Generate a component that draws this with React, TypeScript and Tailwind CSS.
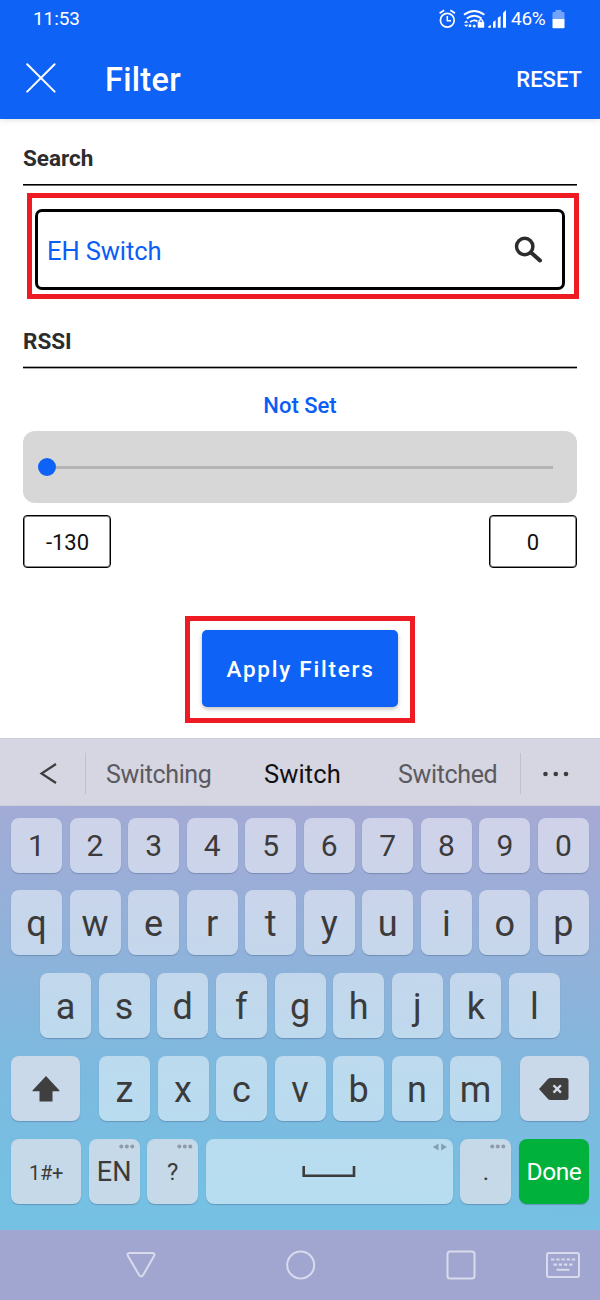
import type { ReactNode } from 'react';

const numberKeys = ['1', '2', '3', '4', '5', '6', '7', '8', '9', '0'];
const topKeys = ['q', 'w', 'e', 'r', 't', 'y', 'u', 'i', 'o', 'p'];
const homeKeys = ['a', 's', 'd', 'f', 'g', 'h', 'j', 'k', 'l'];
const bottomKeys = ['z', 'x', 'c', 'v', 'b', 'n', 'm'];

function Key({ children, className = 'w-[51px] bg-white/48 pt-[2px]' }: { children?: ReactNode; className?: string }) {
  return (
    <div
      className={`relative flex h-full shrink-0 items-center justify-center rounded-[8px] shadow-[0_1px_1px_rgba(70,90,130,0.4)] ${className}`}
    >
      {children}
    </div>
  );
}

function Dots() {
  return (
    <svg className="absolute top-[5px] right-[5px]" width="16" height="5" viewBox="0 0 16 5" fill="#8f9ba8">
      <circle cx="2.3" cy="2.5" r="2" />
      <circle cx="7.8" cy="2.5" r="2" />
      <circle cx="13.3" cy="2.5" r="2" />
    </svg>
  );
}

function StatusIcons() {
  return (
    <svg width="70" height="22" viewBox="437 8 70 22" fill="none" stroke="#fff">
      <circle cx="446.3" cy="20.2" r="6.9" strokeWidth="1.7" />
      <path d="M446.3 16v4.700h3.800" strokeWidth="1.5" />
      <path d="M438.600 13.300l4.600-3.100M454 13.300l-4.600-3.100" strokeWidth="1.7" />
      <path d="M463 14.800q10.200-7.600 20.400 0" strokeWidth="1.9" />
      <path d="M465.800 18.600q7.400-5.700 14.800 0" strokeWidth="1.9" />
      <path d="M469 22q4.300-3 7.500-.5" strokeWidth="1.8" />
      <g fill="#fff" stroke="none">
        <circle cx="473.200" cy="26" r="1.500" />
        <path d="M463 22.800l2.200-2.200 2.200 2.200zM463 24.800l2.200 2.200 2.200-2.200zM467.800 24.500h2.400v2.400h-2.400z" />
        <rect x="476.700" y="21.800" width="6.500" height="5.900" rx=".6" />
        <path d="M487.300 27.700v-1.400l2.600-1.400v2.800zM492 27.700v-5.700l2.600-1.800v7.500zM496.800 27.700v-9.900l2.800-1.800v11.700z" />
        <path d="M502 27.700V13l3-3v17.700z" />
      </g>
      <path d="M478.200 22v-1.300q1.700-2.300 3.500 0v1.300" strokeWidth="1.2" />
    </svg>
  );
}

function SectionTitle({ children }: { children: ReactNode }) {
  return <h2 className="h-[26px] text-[22.500px] leading-[26px] font-bold text-[#2b2c2e]">{children}</h2>;
}

export default function App() {
  return (
    <div className="flex h-[1300px] w-[600px] flex-col overflow-hidden bg-white font-['Roboto',sans-serif] whitespace-nowrap">
      <header className="h-[119px] shrink-0 bg-[#0f62f6] text-white shadow-[0_1px_6px_rgba(0,0,0,0.12)]">
        <div className="flex h-[38px] items-center pr-[35px] pb-[1px] pl-[33px]">
          <span className="text-[19px] leading-none tracking-[-0.100px]">11:53</span>
          <div className="ml-auto flex items-center">
            <StatusIcons />
            <span className="ml-[3px] w-[37px] text-[19px] leading-none tracking-[-0.300px]">46%</span>
            <svg className="ml-[4px]" width="13" height="20" viewBox="0 0 13 20">
              <path d="M3.500 1h6v2h2q1 0 1 1v6H.5V4q0-1 1-1h2z" fill="#fff" fillOpacity=".42" />
              <path d="M.5 10h12v8.500q0 .8-1 .8h-10q-1 0-1-.8z" fill="#fff" />
            </svg>
          </div>
        </div>
        <div className="flex h-[81px] items-center pt-[3px] pr-[18px] pl-[26px]">
          <svg className="mb-[4px]" width="30" height="30" viewBox="0 0 30 30" stroke="#fff" strokeWidth="2" strokeLinecap="round">
            <path d="M1.200 1.200l27.400 27.400M28.600 1.200L1.200 28.600" />
          </svg>
          <h1 className="ml-[49px] text-[32.500px] leading-none font-medium tracking-[0.300px]">Filter</h1>
          <span className="ml-auto text-[22px] leading-none font-medium">RESET</span>
        </div>
      </header>

      <main className="flex h-[619px] shrink-0 flex-col px-[23px] pt-[26px]">
        <SectionTitle>Search</SectionTitle>
        <div className="mt-[13px] h-[2px] w-[554px] shrink-0 border-t border-black bg-[#666]" />
        <div className="mt-[7px] ml-[4px] h-[106px] w-[552px] shrink-0 border-[5px] border-[#ee1b23] pt-[11px] pl-[3px]">
          <div className="flex h-[81px] w-[530px] items-center justify-between rounded-[7px] border-[3px] border-black pr-[19px] pl-[9px]">
            <span className="pt-[4px] text-[25.500px] leading-none tracking-[-0.100px] text-[#0a5df5]">EH Switch</span>
            <svg className="mb-[2px]" width="30" height="30" viewBox="512 234 30 30" fill="none" stroke="#2b2c2e">
              <circle cx="523.700" cy="246.500" r="8.200" strokeWidth="3.500" />
              <path d="M530 252.500l9 8" strokeWidth="4" strokeLinecap="round" />
            </svg>
          </div>
        </div>
        <div className="mt-[29px]">
          <SectionTitle>RSSI</SectionTitle>
        </div>
        <div className="mt-[12px] h-[3px] w-[554px] shrink-0 border-y border-[#aaa] bg-black" />
        <p className="mt-[24px] h-[26px] text-center text-[22px] leading-[26px] font-medium text-[#0a5df5]">Not Set</p>
        <div className="mt-[12px] flex h-[72px] w-[554px] shrink-0 items-center rounded-[12px] bg-[#d7d7d7] pl-[15px]">
          <div className="h-[18px] w-[18px] rounded-full bg-[#0f62f6]" />
          <div className="h-[3px] w-[497px] bg-[#b3b3b3]" />
        </div>
        <div className="mt-[12px] flex h-[53px] shrink-0 justify-between text-[22px] text-[#111]">
          <div className="flex w-[88px] items-center justify-center rounded-[4px] border border-black pt-[2px] pl-[1px] shadow-[inset_0_0_0_1px_#888]">-130</div>
          <div className="flex w-[88px] items-center justify-center rounded-[4px] border border-black pt-[2px] shadow-[inset_0_0_0_1px_#888]">0</div>
        </div>
        <div className="mt-[48px] ml-[162px] flex h-[107px] w-[230px] shrink-0 justify-center border-[5px] border-[#ee1b23] pt-[9px]">
          <button className="h-[77px] w-[196px] rounded-[5px] bg-[#0f62f6] pt-[2px] pl-[1px] text-[22.500px] font-medium tracking-[1.750px] text-white shadow-[0_2px_4px_rgba(0,0,0,0.25)]">
            Apply Filters
          </button>
        </div>
      </main>

      <div className="flex h-[68px] shrink-0 items-center border-t border-b border-[#cccddd] bg-[#d6d5e2] pt-[3px] text-[25px] text-[#5a5a60]">
        <svg className="ml-[39px]" width="20" height="24" viewBox="0 0 20 24" fill="none" stroke="#3d3d3d" strokeWidth="2.200">
          <path d="M17 2L2.500 11.500l14.500 9.500" />
        </svg>
        <div className="ml-[25.500px] h-[41px] w-[1.500px] bg-[#c0c0cf]" />
        <span className="ml-[20px] w-[158px] pt-[2px] tracking-[-0.350px]">Switching</span>
        <span className="w-[134px] pt-[1px] text-[25.500px] tracking-[0.100px] text-[#111]">Switch</span>
        <span className="w-[122px] pt-[2px] tracking-[-0.350px]">Switched</span>
        <div className="h-[41px] w-[1px] bg-[#c0c0cf]" />
        <svg className="ml-[21px]" width="28" height="6" viewBox="0 0 28 6" fill="#3d3d3d">
          <circle cx="3.500" cy="3" r="2.300" />
          <circle cx="13.800" cy="3" r="2.300" />
          <circle cx="24" cy="3" r="2.300" />
        </svg>
      </div>

      <section className="flex h-[424px] shrink-0 flex-col bg-[linear-gradient(184deg,#a6a9d3_0%,#9dadd7_18%,#8fb2da_38%,#7eb9df_62%,#75c0e3_90%,#75c1e4_100%)] px-[11px] pt-[12px] text-[#3c3b3b]">
        <div className="flex h-[55px] justify-between text-[30px]">
          {numberKeys.map((k) => (
            <Key key={k} className="w-[51px] bg-white/48">
              {k}
            </Key>
          ))}
        </div>
        <div className="mt-[17px] flex h-[65px] justify-between text-[36px]">
          {topKeys.map((k) => (
            <Key key={k}>{k}</Key>
          ))}
        </div>
        <div className="mx-[29px] mt-[18px] flex h-[65px] justify-between text-[36px]">
          {homeKeys.map((k) => (
            <Key key={k}>{k}</Key>
          ))}
        </div>
        <div className="mt-[18px] flex h-[65px] justify-between text-[36px]">
          <Key className="w-[69px] bg-[#c9d9ea]">
            <svg width="28" height="26" viewBox="0 0 28 26" fill="#3f3f3f">
              <path d="M14 0L27.500 14.500v.8H20.500V25.500H7.500V15.300H.5v-.8z" />
            </svg>
          </Key>
          <div className="flex w-[402px] justify-between">
            {bottomKeys.map((k) => (
              <Key key={k}>{k}</Key>
            ))}
          </div>
          <Key className="w-[69px] bg-[#c9d9ea]">
            <svg className="mr-[2px]" width="30" height="22" viewBox="0 0 30 22">
              <path d="M0 11L9 1q1-1 2.500-1H27q2.500 0 2.500 2.500v17q0 2.500-2.500 2.500H11.500Q10 22 9 21z" fill="#3f3f3f" />
              <path d="M14.500 7.200l7.400 7.400M21.900 7.200l-7.400 7.400" stroke="#d3deea" strokeWidth="2.300" />
            </svg>
          </Key>
        </div>
        <div className="mt-[18px] flex h-[65px] justify-between">
          <Key className="w-[70px] bg-[#c6d9e9] pt-[2px] text-[20px] tracking-[-0.300px]">1#+</Key>
          <Key className="w-[51px] bg-[#c6d9e9] pt-[2px] text-[27px]">
            <Dots />
            EN
          </Key>
          <Key className="w-[51px] bg-[#c6d9e9] text-[24px]">
            <Dots />?
          </Key>
          <Key className="w-[247px] bg-white/48">
            <svg width="54" height="13" viewBox="0 0 54 13" fill="none" stroke="#3c3b3b" strokeWidth="2.600">
              <path d="M1.700 1v9.800h50.300V1" />
            </svg>
            <svg className="absolute top-[4px] right-[5px]" width="16" height="8" viewBox="0 0 16 8" fill="#83a0b0">
              <path d="M6.500 .5v7L.8 4zM9.200 .5v7L15 4z" />
            </svg>
          </Key>
          <Key className="w-[51px] bg-[#c6d9e9] text-[24px]">
            <Dots />.
          </Key>
          <Key className="w-[70px] bg-[#00b13b] pt-[2px] text-[24.500px] tracking-[-0.400px] text-white">Done</Key>
        </div>
      </section>

      <nav className="flex h-[70px] shrink-0 items-center bg-[#a0a6cf] pl-[126px]">
        <svg width="30" height="30" viewBox="0 0 30 30" fill="none" stroke="#d9dbed" strokeWidth="2">
          <path d="M4 3h22q3.500 0 2 3l-10.500 18.500q-2.300 4-4.700 0L2 6Q.5 3 4 3z" />
        </svg>
        <svg className="ml-[130px]" width="30" height="30" viewBox="0 0 30 30" fill="none" stroke="#d9dbed" strokeWidth="2">
          <circle cx="14.700" cy="15" r="13.500" />
        </svg>
        <svg className="ml-[129.500px]" width="30" height="30" viewBox="0 0 30 30" fill="none" stroke="#d9dbed" strokeWidth="2">
          <rect x="1.500" y="1.500" width="27" height="27" rx="2.500" />
        </svg>
        <svg className="ml-[69px]" width="36" height="28" viewBox="0 0 36 28" fill="none" stroke="#d9dbed">
          <rect x="2" y="2" width="32" height="24" rx="2" strokeWidth="2" />
          <path d="M6 8.500h25" strokeWidth="2.200" strokeDasharray="3.400 1.800" />
          <path d="M8.500 13.700h20" strokeWidth="2.200" strokeDasharray="3.400 1.800" />
          <path d="M11.500 18.800h13" strokeWidth="2" />
        </svg>
      </nav>
    </div>
  );
}
